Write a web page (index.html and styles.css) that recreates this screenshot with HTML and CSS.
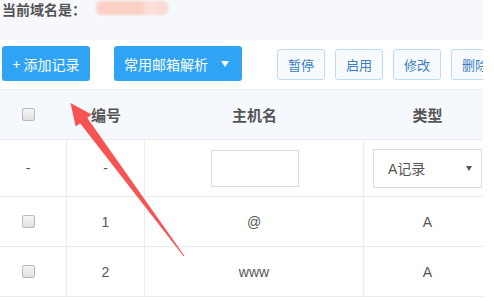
FILE: index.html
```html
<!DOCTYPE html>
<html lang="zh-CN">
<head>
<meta charset="utf-8">
<title>域名解析</title>
<link rel="stylesheet" href="styles.css">
</head>
<body>
<div class="page">
  <div class="domain">
    <span class="label">当前域名是：</span><span class="blur"></span>
  </div>
  <div class="toolbar">
    <button class="btn primary add">+ 添加记录</button>
    <button class="btn primary mail"><span>常用邮箱解析</span><span class="caret"></span></button>
    <div class="actions">
      <button class="btn ghost">暂停</button>
      <button class="btn ghost">启用</button>
      <button class="btn ghost">修改</button>
      <button class="btn ghost">删除</button>
    </div>
  </div>
  <div class="records">
    <div class="row head">
      <div class="cell first"><input type="checkbox" class="check"></div>
      <div class="cell">编号</div>
      <div class="cell">主机名</div>
      <div class="cell">类型</div>
    </div>
    <div class="row edit">
      <div class="cell first">-</div>
      <div class="cell">-</div>
      <div class="cell"><input type="text" class="host"></div>
      <div class="cell"><div class="select"><span>A记录</span><span class="tri"></span></div></div>
    </div>
    <div class="row">
      <div class="cell first"><input type="checkbox" class="check"></div>
      <div class="cell">1</div>
      <div class="cell">@</div>
      <div class="cell">A</div>
    </div>
    <div class="row">
      <div class="cell first"><input type="checkbox" class="check"></div>
      <div class="cell">2</div>
      <div class="cell">www</div>
      <div class="cell">A</div>
    </div>
  </div>
</div>
<svg class="arrow" width="494" height="301" viewBox="0 0 494 301">
  <polygon points="70.5,103 91.7,114.6 87.3,117.9 184.4,255.7 183.6,256.3 80.1,123.3 75.7,126.6" fill="#f65353"/>
</svg>
</body>
</html>
```

FILE: styles.css
```css
* { box-sizing: border-box; }
html, body { margin: 0; padding: 0; background: #ffffff; }
body {
  font-family: "Liberation Sans", "Noto Sans CJK SC", sans-serif;
  color: #555;
  position: relative;
  width: 494px;
  height: 301px;
  overflow: hidden;
}
.page { width: 483px; overflow: hidden; }

.domain {
  height: 40px;
  background: #f6f8fc;
  padding: 1px 0 0 2px;
  display: flex;
  align-items: flex-start;
}
.label {
  font-family: "Noto Sans CJK SC", sans-serif;
  font-weight: bold;
  font-size: 14px;
  line-height: 16px;
  color: #555;
}
.blur {
  display: inline-block;
  width: 72px;
  height: 14px;
  margin-left: 10px;
  border-radius: 6px;
  background: linear-gradient(90deg, #fbd2c6 0%, #fbd0c4 60%, #fbe0dc 75%, #fad8d2 100%);
  filter: blur(1px);
}

.toolbar {
  height: 50px;
  padding: 6px 0 0 2px;
  border-bottom: 1px solid #ececec;
  display: flex;
  align-items: flex-start;
  white-space: nowrap;
}
.btn {
  font-family: "Noto Sans CJK SC", sans-serif;
  border-radius: 3px;
  padding: 0;
  margin: 0;
  flex: none;
  cursor: pointer;
}
.primary {
  height: 35px;
  background: #2fa4f5;
  border: none;
  color: #fff;
  font-size: 14px;
  display: flex;
  align-items: center;
  justify-content: center;
}
.add { width: 88px; }
.mail {
  width: 128px;
  margin-left: 24px;
  justify-content: flex-start;
  padding-left: 10px;
  gap: 13px;
}
.caret {
  width: 0; height: 0;
  border-left: 4px solid transparent;
  border-right: 4px solid transparent;
  border-top: 6px solid #fff;
}
.actions {
  display: flex;
  gap: 10px;
  margin-left: 35px;
  margin-top: 3px;
  flex: none;
}
.ghost {
  width: 48px;
  height: 31px;
  background: #f7fbff;
  border: 1px solid #bcdcf6;
  color: #3b7cc2;
  font-size: 13px;
}

.records { width: 491px; }
.row {
  display: grid;
  grid-template-columns: 67px 78px 219px 127px;
  height: 50px;
  border-bottom: 1px solid #ebebeb;
  font-size: 14px;
}
.row.head {
  background: #f5f8fd;
  font-family: "Noto Sans CJK SC", sans-serif;
  font-weight: bold;
  font-size: 15px;
  color: #555;
}
.row.edit { height: 57px; }
.cell {
  display: flex;
  align-items: center;
  justify-content: center;
  border-right: 1px solid #ebebeb;
}
.row.head .cell { border-right: none; }
.cell:last-child { border-right: none; }
.cell.first { padding-right: 10px; }

.check {
  -webkit-appearance: none;
  appearance: none;
  width: 13px;
  height: 13px;
  margin: 0;
  border: 1px solid #b9b9b9;
  border-radius: 2px;
  background: linear-gradient(#f4f4f4, #e2e2e2);
}
.host {
  width: 88px;
  height: 37px;
  margin: 0;
  border: 1px solid #dcdcdc;
  background: #fff;
  margin-left: 1px;
}
.select {
  width: 109px;
  height: 39px;
  border: 1px solid #dcdcdc;
  background: #fff;
  display: flex;
  align-items: center;
  justify-content: space-between;
  padding: 0 9px 0 14px;
  font-family: "Liberation Sans", "Noto Sans CJK SC", sans-serif;
  font-size: 14px;
  color: #555;
}
.tri {
  width: 0; height: 0;
  border-left: 3px solid transparent;
  border-right: 3px solid transparent;
  border-top: 5px solid #555;
}

.arrow {
  position: absolute;
  left: 0;
  top: 0;
  pointer-events: none;
}
```
